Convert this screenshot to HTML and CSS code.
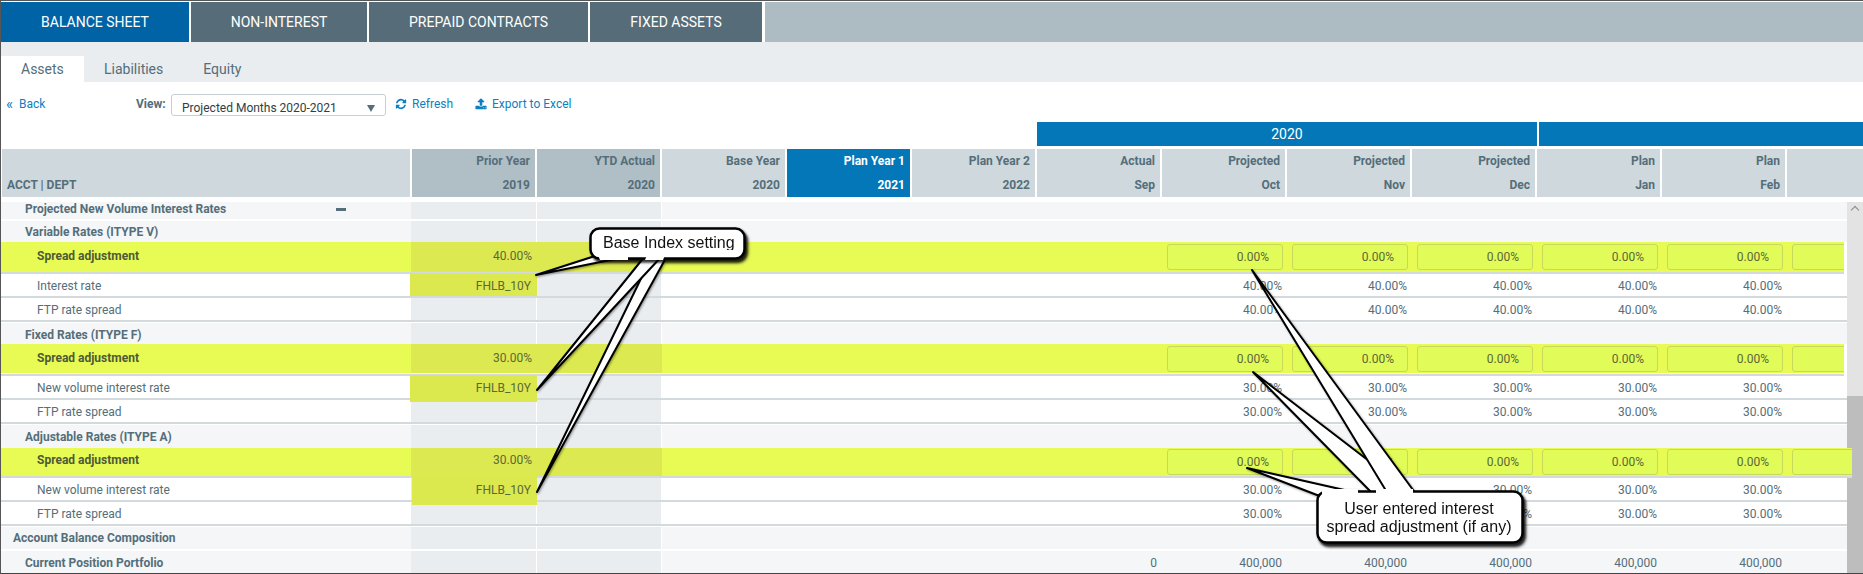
FILE: index.html
```html
<!DOCTYPE html>
<html lang="en">
<head>
  <meta charset="UTF-8" />
  <title>Balance Sheet - Projected Months</title>
  <link rel="stylesheet" href="styles.css">
</head>
<body>
<div class="page">
  <nav class="tabs">
    <div class="tab active t1">BALANCE SHEET</div>
    <div class="tab t2">NON-INTEREST</div>
    <div class="tab t3">PREPAID CONTRACTS</div>
    <div class="tab t4">FIXED ASSETS</div>
    <div class="tab-rest"></div>
  </nav>

  <div class="subtabs">
    <div class="subtab active">Assets</div>
    <div class="subtab">Liabilities</div>
    <div class="subtab">Equity</div>
  </div>

  <div class="toolbar">
    <a class="link back"><span class="chev">«</span> Back</a>
    <span class="view-label">View:</span>
    <div class="select">Projected Months 2020-2021<span class="caret"></span></div>
    <a class="link refresh">
      <svg class="icon" viewBox="0 0 1792 1792"><path d="M1639 1056q0 5-1 7-64 268-268 434.5t-478 166.5q-146 0-282.5-55t-243.5-157l-129 129q-19 19-45 19t-45-19-19-45v-448q0-26 19-45t45-19h448q26 0 45 19t19 45-19 45l-137 137q71 66 161 102t187 36q134 0 250-65t186-179q11-17 53-117 8-23 30-23h192q13 0 22.5 9.5t9.5 22.5zm25-800v448q0 26-19 45t-45 19h-448q-26 0-45-19t-19-45 19-45l138-138q-148-137-349-137-134 0-250 65t-186 179q-11 17-53 117-8 23-30 23h-199q-13 0-22.5-9.5t-9.5-22.5v-7q65-268 270-434.5t480-166.5q146 0 284 55.5t245 156.5l130-129q19-19 45-19t45 19 19 45z"/></svg>
      Refresh
    </a>
    <a class="link export">
      <svg class="icon" viewBox="0 0 1792 1792"><path d="M1344 1472q0-26-19-45t-45-19-45 19-19 45 19 45 45 19 45-19 19-45zm256 0q0-26-19-45t-45-19-45 19-19 45 19 45 45 19 45-19 19-45zm128-224v320q0 40-28 68t-68 28h-1472q-40 0-68-28t-28-68v-320q0-40 28-68t68-28h427q21 56 70.5 92t110.5 36h256q61 0 110.5-36t70.5-92h427q40 0 68 28t28 68zm-325-648q-17 40-59 40h-256v448q0 26-19 45t-45 19h-256q-26 0-45-19t-19-45v-448h-256q-42 0-59-40-17-39 14-69l448-448q18-19 45-19t45 19l448 448q31 30 14 69z"/></svg>
      Export to Excel
    </a>
  </div>

  <div class="bands">
    <div class="band band-2020">2020</div>
    <div class="band band-next"></div>
  </div>

  <div class="head">
    <div class="hcell hlabel">ACCT | DEPT</div>
    <div class="hcell dark">Prior Year<br>2019</div>
    <div class="hcell dark">YTD Actual<br>2020</div>
    <div class="hcell">Base Year<br>2020</div>
    <div class="hcell plan">Plan Year 1<br>2021</div>
    <div class="hcell">Plan Year 2<br>2022</div>
    <div class="hcell">Actual<br>Sep</div>
    <div class="hcell">Projected<br>Oct</div>
    <div class="hcell">Projected<br>Nov</div>
    <div class="hcell">Projected<br>Dec</div>
    <div class="hcell">Plan<br>Jan</div>
    <div class="hcell">Plan<br>Feb</div>
    <div class="hcell"></div>
  </div>

  <div class="body">
    <div class="rows">
      <div class="row sec r-top">
        <div class="label b ind1 toggle">Projected New Volume Interest Rates<span class="minus"></span></div>
        <div class="c prior"></div><div class="c ytd"></div>
      </div>
      <div class="row sec r-var">
        <div class="label b ind1">Variable Rates (ITYPE V)</div>
        <div class="c prior"></div><div class="c ytd"></div>
      </div>

      <div class="row spread s1">
        <div class="label b ind2">Spread adjustment</div>
        <div class="c prior">40.00%</div><div class="c ytd"></div><div class="skip4"></div>
        <div class="c"><div class="rate">0.00%</div></div>
        <div class="c"><div class="rate">0.00%</div></div>
        <div class="c"><div class="rate">0.00%</div></div>
        <div class="c"><div class="rate">0.00%</div></div>
        <div class="c"><div class="rate">0.00%</div></div>
        <div class="c"><div class="rate"></div></div>
      </div>
      <div class="row line">
        <div class="label ind2">Interest rate</div>
        <div class="c prior mark m1"><span>FHLB_10Y</span></div><div class="c ytd"></div><div class="skip4"></div>
        <div class="c">40.00%</div><div class="c">40.00%</div><div class="c">40.00%</div><div class="c">40.00%</div><div class="c">40.00%</div>
      </div>
      <div class="row line">
        <div class="label ind2">FTP rate spread</div>
        <div class="c prior"></div><div class="c ytd"></div><div class="skip4"></div>
        <div class="c">40.00%</div><div class="c">40.00%</div><div class="c">40.00%</div><div class="c">40.00%</div><div class="c">40.00%</div>
      </div>

      <div class="row sec r-fix">
        <div class="label b ind1">Fixed Rates (ITYPE F)</div>
        <div class="c prior"></div><div class="c ytd"></div>
      </div>
      <div class="row spread s2">
        <div class="label b ind2">Spread adjustment</div>
        <div class="c prior">30.00%</div><div class="c ytd"></div><div class="skip4"></div>
        <div class="c"><div class="rate">0.00%</div></div>
        <div class="c"><div class="rate">0.00%</div></div>
        <div class="c"><div class="rate">0.00%</div></div>
        <div class="c"><div class="rate">0.00%</div></div>
        <div class="c"><div class="rate">0.00%</div></div>
        <div class="c"><div class="rate"></div></div>
      </div>
      <div class="row line">
        <div class="label ind2">New volume interest rate</div>
        <div class="c prior mark m2"><span>FHLB_10Y</span></div><div class="c ytd"></div><div class="skip4"></div>
        <div class="c">30.00%</div><div class="c">30.00%</div><div class="c">30.00%</div><div class="c">30.00%</div><div class="c">30.00%</div>
      </div>
      <div class="row line">
        <div class="label ind2">FTP rate spread</div>
        <div class="c prior"></div><div class="c ytd"></div><div class="skip4"></div>
        <div class="c">30.00%</div><div class="c">30.00%</div><div class="c">30.00%</div><div class="c">30.00%</div><div class="c">30.00%</div>
      </div>

      <div class="row sec r-adj">
        <div class="label b ind1">Adjustable Rates (ITYPE A)</div>
        <div class="c prior"></div><div class="c ytd"></div>
      </div>
      <div class="row spread s3">
        <div class="label b ind2">Spread adjustment</div>
        <div class="c prior">30.00%</div><div class="c ytd"></div><div class="skip4"></div>
        <div class="c"><div class="rate">0.00%</div></div>
        <div class="c"><div class="rate">0.00%</div></div>
        <div class="c"><div class="rate">0.00%</div></div>
        <div class="c"><div class="rate">0.00%</div></div>
        <div class="c"><div class="rate">0.00%</div></div>
        <div class="c"><div class="rate"></div></div>
      </div>
      <div class="row line">
        <div class="label ind2">New volume interest rate</div>
        <div class="c prior mark m3"><span>FHLB_10Y</span></div><div class="c ytd"></div><div class="skip4"></div>
        <div class="c">30.00%</div><div class="c">30.00%</div><div class="c">30.00%</div><div class="c">30.00%</div><div class="c">30.00%</div>
      </div>
      <div class="row line">
        <div class="label ind2">FTP rate spread</div>
        <div class="c prior"></div><div class="c ytd"></div><div class="skip4"></div>
        <div class="c">30.00%</div><div class="c">30.00%</div><div class="c">30.00%</div><div class="c">30.00%</div><div class="c">30.00%</div>
      </div>

      <div class="row sec r-acct">
        <div class="label b ind0">Account Balance Composition</div>
        <div class="c prior"></div><div class="c ytd"></div>
      </div>
      <div class="row sec r-cur">
        <div class="label b ind1">Current Position Portfolio</div>
        <div class="c prior"></div><div class="c ytd"></div><div class="skip3"></div>
        <div class="c">0</div><div class="c">400,000</div><div class="c">400,000</div><div class="c">400,000</div><div class="c">400,000</div><div class="c">400,000</div>
      </div>
    </div>

    <div class="scrollbar">
      <div class="arrow"></div>
      <div class="thumb"></div>
    </div>
  </div>

  <!-- callouts drawn on top of the table -->
  <svg class="callouts" width="1863" height="574" viewBox="0 0 1863 574">
    <defs>
      <clipPath id="clip-base"><rect x="592" y="230" width="150" height="20"/></clipPath>
    </defs>
    <g class="shape">
      <polygon points="537,492 652,256 667,256"/>
      <polygon points="537,390 645,256 662,256"/>
      <polygon points="536,275 595,256 630,256"/>
      <rect class="box" x="590.5" y="228.5" width="154" height="30" rx="9"/>
      <polygon class="cover" points="598,255 628,255 628,260 600,260"/>
      <polygon class="cover" points="647,255 660,255 658,260 645,260"/>
      <polygon class="cover" points="655,255 665,255 663,260 653,260"/>
    </g>
    <text class="note" x="603" y="248" clip-path="url(#clip-base)">Base Index setting</text>

    <g class="shape">
      <polygon points="1247,468 1317,495 1362,494"/>
      <polygon points="1253,372 1373,494 1412,494"/>
      <polygon points="1252,270 1388,494 1416,494"/>
      <rect class="box" x="1317.5" y="491.5" width="205" height="51" rx="9"/>
      <polygon class="cover" points="1322,489 1358,489 1358,496 1322,496"/>
      <polygon class="cover" points="1376,489 1413,489 1413,496 1376,496"/>
    </g>
    <text class="note mid" x="1419" y="514">User entered interest</text>
    <text class="note mid" x="1419" y="532">spread adjustment (if any)</text>
  </svg>
</div>
</body>
</html>
```

FILE: styles.css
```css
:root {
  --blue: #0477b8;
  --tab-blue: #0063a6;
  --slate: #546e7a;
  --head: #cfd8dc;
  --head-dark: #b0bec5;
  --soft: #e9edf0;
  --row: #f5f6f7;
  --line: #d3dade;
  --yellow: #e8fb55;
  --yellow-dark: #dde950;
  --link: #0b7fc1;
}

* {
  box-sizing: border-box;
}

html, body {
  margin: 0;
  padding: 0;
}

body {
  font-family: Roboto, "Liberation Sans", sans-serif;
  font-size: 12px;
  color: var(--slate);
  background: #fff;
}

.page {
  position: relative;
  width: 1863px;
  height: 574px;
  overflow: hidden;
  border-top: 1px solid #555;
  border-left: 1px solid #555;
  border-bottom: 1px solid #444;
}

/* top tabs */
.tabs {
  display: flex;
  gap: 2px;
  height: 40px;
  margin-top: 1px;
}

.tab {
  display: flex;
  align-items: center;
  justify-content: center;
  background: #566d79;
  color: #fff;
  font-size: 14px;
}

.tab.active {
  background: var(--tab-blue);
}

.t1 { width: 188px; }
.t2 { width: 176px; }
.t3 { width: 219px; }
.t4 { width: 172px; margin-right: 1px; }

.tab-rest {
  flex: 1;
  background: #adbcc2;
}

/* sub tabs */
.subtabs {
  display: flex;
  height: 40px;
  padding-top: 14px;
  background: var(--soft);
}

.subtab {
  padding: 0 20px;
  line-height: 26px;
  font-size: 14px;
}

.subtab.active {
  background: #fff;
  width: 83px;
}

/* toolbar */
.toolbar {
  display: flex;
  align-items: flex-start;
  height: 40px;
  padding-top: 12px;
  line-height: 20px;
}

.link {
  display: flex;
  align-items: center;
  color: var(--link);
}

.back {
  width: 135px;
  padding-left: 5px;
}

.chev {
  width: 13px;
  font-size: 15px;
}

.view-label {
  width: 35px;
  font-weight: 700;
}

.select {
  position: relative;
  width: 215px;
  height: 22px;
  padding: 3px 10px 0;
  border: 1px solid #c8cfd3;
  border-radius: 3px;
  color: #2f3d44;
}

.caret {
  position: absolute;
  right: 10px;
  top: 10px;
  border-left: 4px solid transparent;
  border-right: 4px solid transparent;
  border-top: 7px solid var(--slate);
}

.icon {
  width: 12px;
  height: 12px;
  margin-right: 5px;
  fill: var(--link);
}

.refresh {
  margin-left: 9px;
  width: 80px;
}

/* year bands */
.bands {
  display: flex;
  gap: 2px;
  height: 24px;
  margin-left: 1036px;
}

.band {
  background: var(--blue);
  color: #fff;
  font-size: 14px;
  line-height: 24px;
  text-align: center;
}

.band-2020 { width: 500px; }
.band-next { flex: 1; }

/* column heads */
.head {
  display: flex;
  gap: 2px;
  height: 48px;
  margin: 3px 0 0 1px;
}

.hcell {
  flex: none;
  width: 123px;
  padding: 0 5px;
  background: var(--head);
  font-weight: 700;
  line-height: 24px;
  text-align: right;
}

.hcell.dark { background: var(--head-dark); }

.hcell.plan {
  background: var(--blue);
  color: #fff;
}

.hcell.hlabel {
  width: 408px;
  padding-top: 24px;
  text-align: left;
}

/* table body */
.body {
  display: flex;
  height: 376px;
}

.rows {
  width: 1846px;
}

.row {
  position: relative;
  display: flex;
  overflow: hidden;
}

.label {
  flex: none;
  width: 410px;
  line-height: 20px;
  align-self: center;
}

.label.b { font-weight: 700; }
.ind0 { padding-left: 12px; }
.ind1 { padding-left: 24px; }
.ind2 { padding-left: 36px; }

.toggle {
  position: relative;
}

.minus {
  position: absolute;
  left: 335px;
  top: 9px;
  width: 10px;
  height: 3px;
  background: var(--slate);
}

.c {
  flex: none;
  display: flex;
  align-items: center;
  justify-content: flex-end;
  width: 125px;
  padding-right: 5px;
}

.c.prior {
  width: 126px;
  background: var(--soft);
  background-clip: padding-box;
  border-right: 1px solid #fff;
}

.c.ytd {
  width: 125px;
  background: var(--soft);
  border-right: 1px solid #fff;
}

.skip4 { flex: none; width: 500px; }
.skip3 { flex: none; width: 375px; }

/* section rows */
.sec {
  background: var(--row);
}

.r-top  { height: 17px; margin: 5px 0 2px; }
.r-top .label { margin-top: -4px; }
.r-var  { height: 21px; }
.r-fix  { height: 21px; margin-top: 1px; }
.r-fix .label { padding-top: 2px; }
.r-adj  { height: 23px; margin-top: 1px; }
.r-acct { height: 22px; margin-top: 1px; }
.r-cur  { height: 22px; margin-top: 2px; }
.r-cur .label,
.r-cur .c { padding-top: 1px; }

/* plain rows */
.line {
  height: 24px;
  border-bottom: 2px solid var(--line);
}

.line .label,
.line .c {
  padding-top: 2px;
}

/* spread rows */
.spread {
  margin-right: 3px;
  background: var(--yellow);
  color: #5b6838;
  z-index: 1;
}

.spread .label { color: #4d5a36; }

.spread .c.prior,
.spread .c.ytd {
  background: var(--yellow-dark);
  border-right: 0;
}

.s1 { height: 30px; margin-bottom: 2px; box-shadow: 0 2px 0 var(--line); }
.s2 { height: 29px; margin-bottom: 3px; box-shadow: 0 1px 0 #fff, 0 3px 0 var(--line); }
.s3 { height: 28px; margin: 0 -5px 2px 0; box-shadow: 0 2px 0 var(--line); }

.s1 .label,
.s1 .prior { padding-bottom: 2px; }
.s2 .label,
.s2 .prior { padding-bottom: 1px; }
.s3 .label,
.s3 .prior { padding-bottom: 4px; }

.rate {
  width: 116px;
  height: 26px;
  margin-right: -1px;
  padding-right: 13px;
  line-height: 25px;
  text-align: right;
  background: #e1fb58;
  border: 1px solid #c8d85a;
  border-radius: 3px;
}

/* highlighted Base Index cells, hand marked past their row */
.mark {
  position: relative;
}

.mark span {
  position: relative;
  color: #5b6838;
}

.mark::before {
  content: "";
  position: absolute;
  left: -1px;
  right: -1px;
  background: #dbe94f;
}

.m1::before { top: -1px; bottom: 0; }
.m2::before { top: -1px; bottom: -4px; }
.m3::before { top: -2px; bottom: -5px; left: 1px; }

.line:has(.mark) {
  overflow: visible;
  z-index: 1;
}

/* scrollbar */
.scrollbar {
  position: relative;
  flex: none;
  width: 16px;
  margin-top: 5px;
  height: 371px;
  background: #e3e3e3;
}

.arrow {
  position: absolute;
  left: 5px;
  top: 5px;
  width: 6px;
  height: 6px;
  border-left: 1px solid #8a8a8a;
  border-top: 1px solid #8a8a8a;
  transform: rotate(45deg);
}

.thumb {
  position: absolute;
  left: 0;
  right: 0;
  top: 194px;
  bottom: 0;
  background: #bdbdbd;
}

/* callouts */
.callouts {
  position: absolute;
  left: -1px;
  top: -1px;
  z-index: 2;
}

.shape {
  fill: #fff;
  stroke: #000;
  stroke-width: 2;
  stroke-linejoin: round;
  filter: drop-shadow(1px 1px 1px rgba(0, 0, 0, 0.4));
}

.shape .box {
  stroke-width: 2.5;
  filter: drop-shadow(2px 3px 1px rgba(0, 0, 0, 0.8));
}

.shape .cover {
  stroke: none;
}

.note {
  font-family: "Liberation Sans", Arial, sans-serif;
  font-size: 16px;
  fill: #111;
}

.note.mid {
  text-anchor: middle;
}
```
